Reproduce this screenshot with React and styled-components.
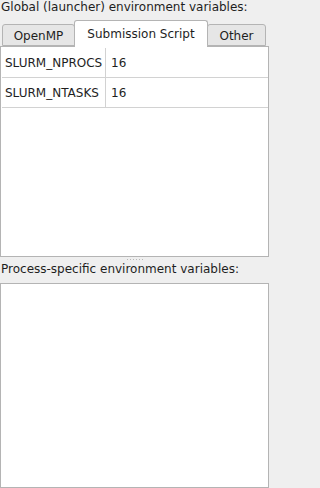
import React from "react";
import styled, { createGlobalStyle } from "styled-components";

const GlobalStyle = createGlobalStyle`
  html, body {
    margin: 0;
    padding: 0;
    background: #efefef;
  }
  body {
    font-family: "DejaVu Sans", "Liberation Sans", sans-serif;
    font-size: 12px;
    color: #1e1e1e;
  }
`;

const globalVars = [
  { name: "SLURM_NPROCS", value: "16" },
  { name: "SLURM_NTASKS", value: "16" },
];

const tabs = [
  { label: "OpenMP", width: 73 },
  { label: "Submission Script", width: 134 },
  { label: "Other", width: 59 },
];

export default function App() {
  return (
    <>
      <GlobalStyle />
      <Page>
        <SectionLabel $height={19}>Global (launcher) environment variables:</SectionLabel>
        <TabBar>
          {tabs.map((t, i) => (
            <Tab key={t.label} $active={i === 1} $width={t.width}>
              {t.label}
            </Tab>
          ))}
        </TabBar>
        <TabPane>
          <VarTable>
            {globalVars.map((v) => (
              <Row key={v.name}>
                <NameCell>{v.name}</NameCell>
                <ValueCell>{v.value}</ValueCell>
              </Row>
            ))}
          </VarTable>
        </TabPane>
        <Splitter>
          <Grip>
            {Array.from({ length: 6 }).map((_, i) => (
              <Dot key={i} />
            ))}
          </Grip>
        </Splitter>
        <SectionLabel $height={21}>Process-specific environment variables:</SectionLabel>
        <ListBox />
      </Page>
    </>
  );
}

const Page = styled.div`
  width: 269px;
  height: 488px;
  display: flex;
  flex-direction: column;
  overflow: hidden;
`;

const SectionLabel = styled.div`
  height: ${(p) => p.$height}px;
  line-height: 15px;
  padding-left: 1px;
  white-space: nowrap;
  box-sizing: border-box;
`;

const TabBar = styled.div`
  display: flex;
  align-items: flex-end;
  padding-left: 2px;
  height: 28px;
  position: relative;
  z-index: 1;
`;

const Tab = styled.div`
  box-sizing: border-box;
  width: ${(p) => p.$width}px;
  height: ${(p) => (p.$active ? 27 : 22)}px;
  margin-bottom: ${(p) => (p.$active ? 0 : 1)}px;
  border: 1px solid #b4b4b4;
  border-bottom: ${(p) => (p.$active ? "none" : "1px solid #b4b4b4")};
  border-radius: 3px 3px 0 0;
  background: ${(p) => (p.$active ? "#ffffff" : "#e6e6e6")};
  display: flex;
  align-items: center;
  justify-content: center;
  padding-top: ${(p) => (p.$active ? 0 : 1)}px;
  white-space: nowrap;
  & + & {
    margin-left: -1px;
  }
`;

const TabPane = styled.div`
  box-sizing: border-box;
  height: 211px;
  margin-top: -1px;
  border: 1px solid #b4b4b4;
  background: #ffffff;
  padding: 1px 0 0 1px;
`;

const VarTable = styled.div`
  display: flex;
  flex-direction: column;
`;

const Row = styled.div`
  display: grid;
  grid-template-columns: 104px 1fr;
  height: 30px;
  border-bottom: 1px solid #d2d2d2;
  box-sizing: border-box;
`;

const NameCell = styled.div`
  display: flex;
  align-items: center;
  padding-left: 3px;
  border-right: 1px solid #d2d2d2;
  white-space: nowrap;
`;

const ValueCell = styled.div`
  display: flex;
  align-items: center;
  padding-left: 5px;
`;

const Splitter = styled.div`
  height: 5px;
  display: flex;
  justify-content: center;
  align-items: center;
`;

const Grip = styled.div`
  display: flex;
  gap: 2px;
`;

const Dot = styled.span`
  width: 1px;
  height: 1px;
  background: #b8b8b8;
`;

const ListBox = styled.div`
  box-sizing: border-box;
  flex: 1;
  border: 1px solid #b4b4b4;
  background: #ffffff;
`;
